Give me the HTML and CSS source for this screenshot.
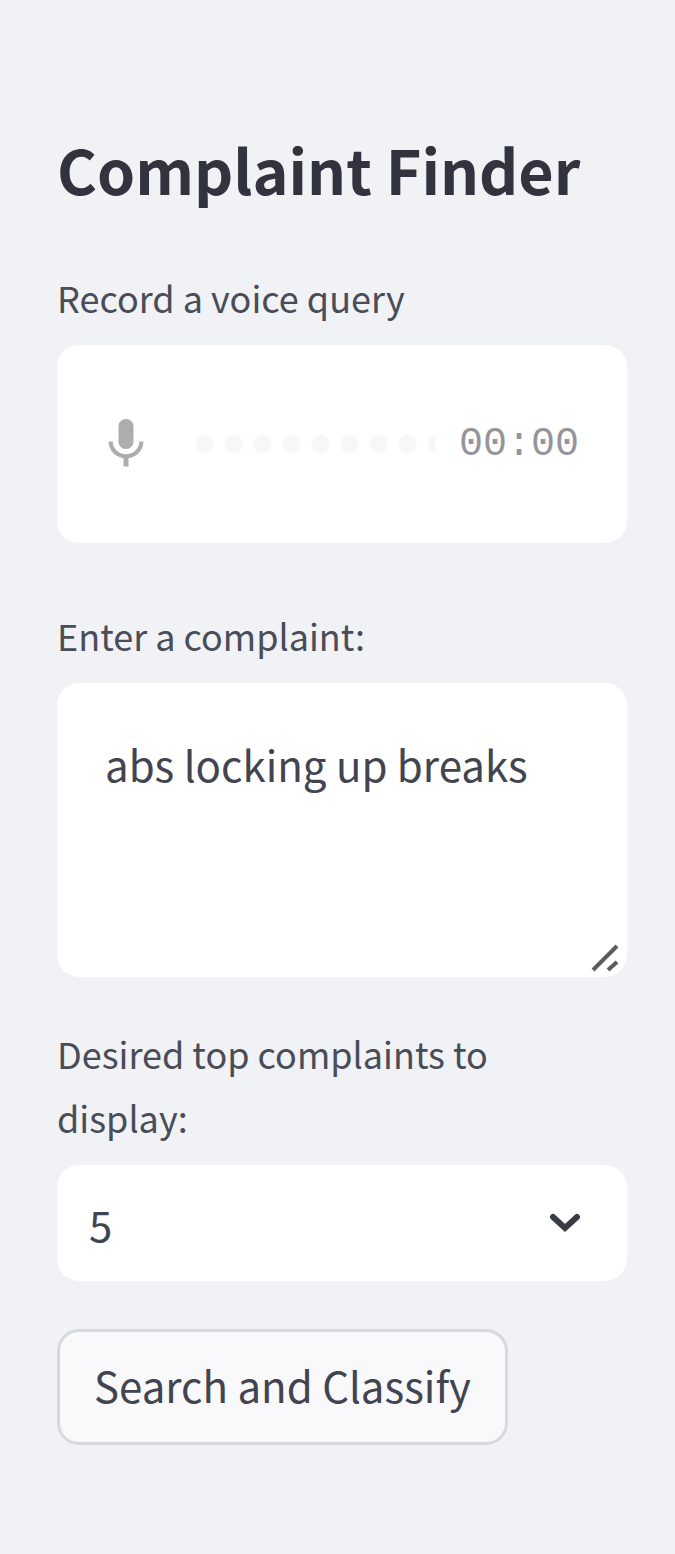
FILE: index.html
```html
<!DOCTYPE html>
<html lang="en">
<head>
<meta charset="utf-8">
<meta name="viewport" content="width=device-width, initial-scale=1">
<title>Complaint Finder</title>
<link rel="stylesheet" href="styles.css">
</head>
<body>
<main class="sidebar">
  <h1 class="title">Complaint Finder</h1>
  <form class="form">
    <div class="field field-audio">
      <span class="label" id="voice-label">Record a voice query</span>
      <div class="box recorder" role="group" aria-labelledby="voice-label">
        <button class="mic" type="button" aria-label="Record">
          <svg class="mic-icon" viewBox="0 0 24 24" aria-hidden="true"><path d="M12 14c1.66 0 2.99-1.34 2.99-3L15 5c0-1.66-1.34-3-3-3S9 3.34 9 5v6c0 1.66 1.34 3 3 3zm5.3-3c0 3-2.54 5.1-5.3 5.1S6.7 14 6.7 11H5c0 3.41 2.72 6.23 6 6.72V21h2v-3.28c3.28-.48 6-3.3 6-6.72h-1.7z"/></svg>
        </button>
        <div class="wave"></div>
        <time class="timer">00:00</time>
      </div>
    </div>
    <div class="field field-text">
      <label class="label" for="complaint">Enter a complaint:</label>
      <div class="control">
        <textarea class="box textarea" id="complaint" spellcheck="false">abs locking up breaks</textarea>
        <svg class="grip" viewBox="0 0 28 28" aria-hidden="true"><path d="M2 26 26 2M17 26l9-8"/></svg>
      </div>
    </div>
    <div class="field field-select">
      <label class="label" for="count">Desired top complaints to display:</label>
      <div class="control">
        <select class="box select" id="count"><option>5</option></select>
        <svg class="chevron" viewBox="0 0 32 20" aria-hidden="true"><path d="m4 4 12 11L28 4"/></svg>
      </div>
    </div>
    <button class="submit" type="button">Search and Classify</button>
  </form>
</main>
</body>
</html>
```
FILE: styles.css
```css
* {
  box-sizing: border-box;
}

body {
  margin: 0;
  background: #f0f2f6;
  color: #31333f;
  font-family: "Noto Sans CJK SC", "Open Sans", sans-serif;
}

.sidebar {
  padding: 128px 48px 110px 57px;
}

.title {
  margin: 0 0 55px;
  font-size: 61px;
  line-height: 82px;
  font-weight: 600;
}

.form {
  display: flex;
  flex-direction: column;
  align-items: stretch;
}

.field {
  display: flex;
  flex-direction: column;
}

.field-audio {
  margin-bottom: 60px;
}

.field-text {
  margin-bottom: 44px;
}

.field-select {
  margin-bottom: 48px;
}

.label {
  margin-bottom: 16px;
  padding-right: 48px;
  font-size: 36px;
  line-height: 64px;
  color: #4a4c57;
}

.box {
  width: 100%;
  border: 0;
  border-radius: 22px;
  background: #fff;
  color: #42444f;
  font-family: inherit;
  font-size: 42px;
}

.recorder {
  display: flex;
  align-items: center;
  height: 198px;
  padding: 0 48px 0 39px;
}

.mic {
  padding: 0;
  border: 0;
  background: none;
}

.mic-icon {
  display: block;
  width: 60px;
  height: 60px;
  fill: #adadaf;
}

.wave {
  flex: 1;
  height: 30px;
  margin: 0 24px 0 34px;
  background: radial-gradient(circle, #f7f7f8 8px, transparent 10px) 0 0 / 29px 30px repeat-x;
}

.timer {
  font-family: "Liberation Mono", monospace;
  font-size: 40px;
  color: #94959c;
}

.control {
  position: relative;
}

.textarea {
  display: block;
  height: 294px;
  padding: 50px 48px;
  line-height: 62px;
  resize: none;
}

.grip {
  position: absolute;
  right: 8px;
  bottom: 5px;
  width: 28px;
  height: 28px;
  fill: none;
  stroke: #5c5c5c;
  stroke-width: 4;
  pointer-events: none;
}

.select {
  display: block;
  height: 116px;
  padding: 0 96px 0 32px;
  appearance: none;
}

.chevron {
  position: absolute;
  right: 46px;
  top: 50%;
  width: 32px;
  height: 20px;
  margin-top: -10px;
  fill: none;
  stroke: #3a3c45;
  stroke-width: 6;
  stroke-linecap: round;
  pointer-events: none;
}

.submit {
  align-self: flex-start;
  height: 116px;
  padding: 0 34px 6px;
  border: 3px solid #d6d8dc;
  border-radius: 22px;
  background: #f9f9fb;
  color: #42444f;
  font-family: inherit;
  font-size: 42px;
}
```
